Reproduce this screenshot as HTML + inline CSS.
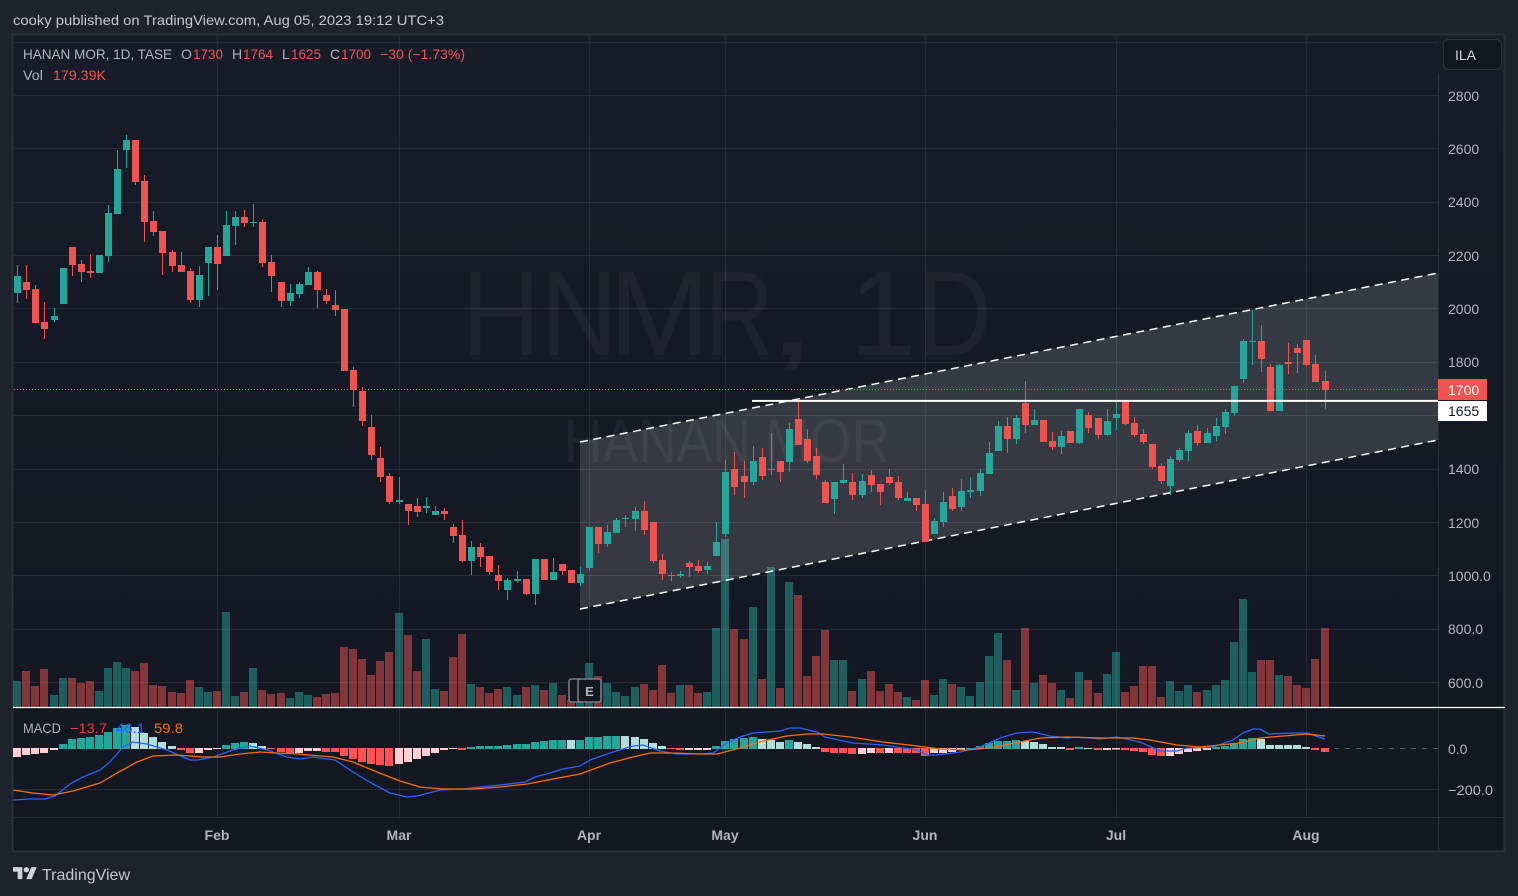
<!DOCTYPE html>
<html>
<head>
<meta charset="utf-8">
<title>HANAN MOR, 1D, TASE</title>
<style>
html,body{margin:0;padding:0;background:#1e222d;width:1518px;height:896px;overflow:hidden}
svg{display:block;position:absolute;left:0;top:0}
text{font-family:"Liberation Sans",sans-serif;font-size:14px}
.p{fill:#b2b5be}
.r{fill:#ef5350}
.t{fill:#b2b5be;font-weight:700;text-anchor:middle}
.w{fill:#fff;fill-opacity:.04;font-size:121px}
</style>
</head>
<body>
<svg width="1518" height="896" viewBox="0 0 1518 896" xmlns="http://www.w3.org/2000/svg">
<defs><linearGradient id="bg" x1="0" y1="0" x2="0" y2="1"><stop offset="0" stop-color="#181c28"/><stop offset="1" stop-color="#131722"/></linearGradient></defs>
<rect width="1518" height="896" fill="#1e222d"/>
<text x="13" y="25" fill="#c6c8d0" textLength="431" lengthAdjust="spacingAndGlyphs">cooky published on TradingView.com, Aug 05, 2023 19:12 UTC+3</text>
<rect x="13" y="35" width="1491" height="816" fill="url(#bg)"/>
<rect x="12.5" y="34.5" width="1492" height="817" fill="none" stroke="#2a2e39" stroke-width="2"/>

<!-- grid -->
<path stroke="#262a35" stroke-width="1" fill="none" d="M14 42.5H1438M14 95.5H1438M14 148.5H1438M14 202.5H1438M14 255.5H1438M14 308.5H1438M14 362.5H1438M14 415.5H1438M14 469.5H1438M14 522.5H1438M14 575.5H1438M14 629.5H1438M14 682.5H1438M14 789.5H1438M217.5 36V817M399.5 36V817M589.5 36V817M725.5 36V817M925.5 36V817M1116.5 36V817M1306.5 36V817"/>
<path stroke="#2a2e39" stroke-width="1" fill="none" d="M14 817.5H1504M1438.5 74V851"/>

<!-- watermark -->
<text x="461" y="355" class="w" textLength="79.5" lengthAdjust="spacingAndGlyphs">H</text>
<text x="541" y="355" class="w" textLength="76" lengthAdjust="spacingAndGlyphs">N</text>
<text x="609" y="355" class="w">M</text>
<text x="704.5" y="355" class="w" textLength="69" lengthAdjust="spacingAndGlyphs">R</text>
<text x="765" y="355" class="w" textLength="54" lengthAdjust="spacingAndGlyphs">,</text>
<text x="849" y="355" class="w">1</text>
<text x="917" y="355" class="w" textLength="75" lengthAdjust="spacingAndGlyphs">D</text>
<text x="564" y="462" fill="#fff" fill-opacity=".05" style="font-size:61px" textLength="326" lengthAdjust="spacingAndGlyphs">HANAN MOR</text>

<!-- volume -->
<g fill="none" stroke-width="8">
<path stroke="#26a69a" stroke-opacity=".5" d="M17 681V707M54 695V707M63 678V707M99 691V707M108 668V707M117 662V707M126 668V707M199 687V707M208 692V707M226 612V707M235 696V707M253 668V707M290 698V707M299 692V707M308 695V707M399 613V707M426 639V707M435 689V707M471 684V707M507 687V707M517 695V707M535 685V707M553 683V707M580 697V707M589 663V707M607 683V707M616 692V707M625 696V707M635 687V707M680 685V707M707 692V707M716 628V707M725 539V707M753 607V707M771 567V707M789 582V707M834 660V707M843 660V707M862 679V707M907 697V707M934 695V707M943 679V707M961 687V707M970 696V707M980 682V707M989 656V707M998 633V707M1016 690V707M1034 683V707M1061 690V707M1079 672V707M1107 674V707M1116 652V707M1170 681V707M1179 691V707M1188 685V707M1207 690V707M1216 685V707M1225 680V707M1234 642V707M1243 599V707M1252 672V707M1279 675V707"/>
<path stroke="#ef5350" stroke-opacity=".5" d="M26 671V707M35 686V707M44 669V707M72 678V707M81 683V707M90 681V707M135 671V707M144 663V707M153 685V707M162 686V707M172 692V707M181 693V707M190 680V707M217 691V707M244 692V707M262 690V707M271 694V707M281 693V707M317 697V707M326 694V707M335 693V707M344 647V707M353 649V707M362 659V707M371 675V707M380 661V707M389 652V707M408 635V707M417 671V707M444 691V707M453 657V707M462 634V707M480 687V707M489 693V707M498 689V707M526 687V707M544 690V707M562 695V707M571 700V707M598 676V707M644 684V707M653 690V707M662 665V707M671 693V707M689 685V707M698 693V707M734 629V707M744 639V707M762 679V707M780 688V707M798 595V707M807 676V707M816 656V707M825 630V707M852 691V707M871 671V707M880 691V707M889 684V707M898 692V707M916 700V707M925 680V707M952 684V707M1007 660V707M1025 628V707M1043 675V707M1052 683V707M1070 698V707M1088 680V707M1098 693V707M1125 692V707M1134 686V707M1143 666V707M1152 666V707M1161 697V707M1197 692V707M1261 660V707M1270 660V707M1288 676V707M1297 685V707M1306 688V707M1315 659V707M1325 628V707"/>
</g>

<!-- channel -->
<polygon points="580,442 1438,273 1438,440 580,609" fill="#fff" fill-opacity=".14"/>
<path d="M580 442L1438 273M580 609L1438 440" stroke="#fff" stroke-width="1.5" stroke-dasharray="8 5.5" fill="none"/>

<!-- last price dotted -->
<path d="M14 389.5H1438" stroke="#ef5350" stroke-width="1" stroke-dasharray="1 2" fill="none"/>

<!-- candle wicks -->
<g fill="none" stroke-width="1">
<path stroke="#26a69a" d="M17.5 265V303M54.5 308V322M108.5 205V262M117.5 150V214M126.5 135V168M199.5 266V307M208.5 247V296M226.5 211V256M235.5 211V245M253.5 204V227M290.5 284V306M299.5 282V298M308.5 267V285M399.5 477V504M426.5 497V513M435.5 506V515M471.5 541V575M507.5 578V600M517.5 571V583M535.5 559V605M553.5 558V580M580.5 567V586M589.5 527V571M607.5 525V547M616.5 518V533M625.5 515V527M635.5 507V531M680.5 571V578M707.5 562V574M716.5 522V556M725.5 460V537M753.5 446V485M771.5 433V475M789.5 423V472M834.5 482V514M843.5 464V484M862.5 474V498M907.5 492V501M934.5 518V534M943.5 492V527M961.5 479V511M970.5 477V498M980.5 469V496M989.5 442V474M998.5 421V451M1016.5 415V444M1034.5 409V425M1061.5 431V454M1079.5 409V444M1107.5 409V436M1116.5 400V430M1170.5 456V495M1179.5 448V462M1188.5 430V461M1207.5 428V443M1216.5 418V441M1225.5 409V434M1234.5 386V416M1243.5 339V383M1252.5 310V365M1279.5 364V411"/>
<path stroke="#ef5350" d="M26.5 265V299M35.5 285V323M44.5 302V339M72.5 247V276M81.5 260V282M90.5 254V278M135.5 140V185M144.5 175V242M153.5 211V236M162.5 231V275M172.5 250V272M181.5 252V272M190.5 268V303M217.5 235V290M244.5 210V227M262.5 219V267M271.5 255V292M281.5 282V307M317.5 271V308M326.5 289V304M335.5 290V316M344.5 309V371M353.5 367V407M362.5 387V426M371.5 415V460M380.5 447V482M389.5 473V504M408.5 504V525M417.5 498V517M444.5 508V520M453.5 524V543M462.5 520V562M480.5 543V567M489.5 556V575M498.5 565V590M526.5 579V595M544.5 559V580M562.5 564V575M571.5 570V583M598.5 527V553M644.5 501V535M653.5 522V563M662.5 554V580M671.5 572V581M689.5 561V577M698.5 560V573M734.5 452V495M744.5 461V498M762.5 448V480M780.5 461V482M798.5 399V445M807.5 429V463M816.5 448V479M825.5 480V503M852.5 473V500M871.5 470V492M880.5 484V505M889.5 469V485M898.5 476V500M916.5 498V511M925.5 490V542M952.5 488V511M1007.5 417V453M1025.5 381V433M1043.5 420V442M1052.5 432V450M1070.5 431V443M1088.5 412V433M1098.5 418V439M1125.5 402V425M1134.5 417V437M1143.5 429V444M1152.5 444V469M1161.5 463V484M1197.5 425V446M1261.5 325V372M1270.5 364V411M1288.5 343V374M1297.5 344V373M1306.5 340V366M1315.5 355V382M1325.5 371V409"/>
</g>
<!-- candle bodies -->
<g fill="none" stroke-width="7">
<path stroke="#26a69a" d="M17.5 276V293M54.5 316V320M63.5 268V304M99.5 255V273M108.5 213V256M117.5 169V214M126.5 140V150M199.5 275V300M208.5 247V263M226.5 225V256M235.5 217V226M253.5 222V223M290.5 293V301M299.5 284V294M308.5 272V285M399.5 500V502M426.5 506V508M435.5 511V515M471.5 547V561M507.5 580V590M517.5 579V581M535.5 559V594M553.5 572V580M580.5 574V583M589.5 527V568M607.5 532V544M616.5 520V533M625.5 518V519M635.5 511V519M680.5 574V576M707.5 566V570M716.5 542V556M725.5 472V534M753.5 461V482M771.5 469V470M789.5 429V462M834.5 482V499M843.5 480V483M862.5 481V495M907.5 498V501M934.5 521V534M943.5 502V522M961.5 491V507M970.5 490V492M980.5 473V491M989.5 453V474M998.5 426V451M1016.5 418V439M1034.5 420V425M1061.5 436V447M1079.5 409V443M1107.5 421V435M1116.5 414V418M1170.5 459V486M1179.5 450V460M1188.5 433V451M1207.5 433V443M1216.5 426V436M1225.5 412V427M1234.5 386V413M1243.5 341V379M1252.5 341V342M1279.5 365V411"/>
<path stroke="#ef5350" d="M26.5 282V290M35.5 289V323M44.5 322V329M72.5 247V265M81.5 264V272M90.5 271V273M135.5 140V182M144.5 181V222M153.5 221V232M162.5 231V253M172.5 252V266M181.5 265V272M190.5 271V300M217.5 247V264M244.5 217V223M262.5 222V263M271.5 262V276M281.5 282V301M317.5 272V290M326.5 295V301M335.5 305V310M344.5 309V371M353.5 370V390M362.5 391V421M371.5 427V455M380.5 458V477M389.5 476V502M408.5 504V511M417.5 506V512M444.5 511V514M453.5 527V536M462.5 535V561M480.5 547V557M489.5 556V572M498.5 575V581M526.5 579V594M544.5 559V580M562.5 564V571M571.5 570V583M598.5 527V544M644.5 511V530M653.5 522V561M662.5 560V574M671.5 575V576M689.5 563V567M698.5 566V571M734.5 469V487M744.5 476V482M762.5 457V476M780.5 461V472M798.5 419V445M807.5 439V461M816.5 456V475M825.5 482V503M852.5 482V495M871.5 475V485M880.5 484V492M889.5 477V483M898.5 482V498M916.5 498V505M925.5 504V542M952.5 496V509M1007.5 426V439M1025.5 403V425M1043.5 420V442M1052.5 441V447M1070.5 431V443M1088.5 415V428M1098.5 418V435M1125.5 402V424M1134.5 423V435M1143.5 434V442M1152.5 444V467M1161.5 466V481M1197.5 431V443M1261.5 341V359M1270.5 367V411M1288.5 362V364M1297.5 348V353M1306.5 340V365M1315.5 364V382M1325.5 381V390"/>
</g>

<!-- horizontal level -->
<path d="M752 400.9H1438" stroke="#fff" stroke-width="2" fill="none"/>

<!-- volume/macd separator -->
<path d="M13 707.5H1505" stroke="#fff" stroke-width="1.2" fill="none"/>

<!-- MACD zero -->
<path d="M14 748.5H1438" stroke="#787b86" stroke-opacity=".6" stroke-width="1" stroke-dasharray="5 6" fill="none"/>

<!-- MACD histogram -->
<g fill="none" stroke-width="8">
<path stroke="#26a69a" d="M63 744V749M72 739V749M81 738V749M90 737V749M99 735V749M108 732V749M117 728V749M126 725V749M226 745V749M235 743V749M244 742V749M471 747V749M480 746V749M489 746V749M498 746V749M507 745V749M517 744V749M526 744V749M535 742V749M544 741V749M553 740V749M562 740V749M580 740V749M589 737V749M598 737V749M607 736V749M616 736V749M716 746V749M725 741V749M734 739V749M744 738V749M753 737V749M789 740V749M970 748V749M980 746V749M989 743V749M998 741V749M1007 741V749M1016 740V749M1079 747V749M1216 747V749M1225 746V749M1234 743V749M1243 739V749M1252 738V749"/>
<path stroke="#b2dfdb" d="M135 727V749M144 733V749M153 737V749M162 742V749M172 746V749M253 743V749M262 746V749M571 740V749M625 736V749M635 737V749M644 739V749M653 743V749M662 746V749M762 739V749M771 740V749M780 742V749M798 742V749M807 744V749M816 747V749M1025 741V749M1034 742V749M1043 744V749M1052 747V749M1061 747V749M1088 748V749M1261 739V749M1270 745V749M1279 745V749M1288 745V749M1297 745V749M1306 747V749"/>
<path stroke="#ff5252" d="M181 748V750M190 748V753M271 748V749M281 748V752M290 748V753M326 748V752M335 748V752M344 748V756M353 748V759M362 748V762M371 748V764M380 748V765M389 748V766M462 748V750M671 748V749M680 748V750M825 748V752M834 748V753M843 748V753M852 748V754M880 748V753M898 748V753M907 748V753M916 748V753M925 748V756M1070 748V750M1098 748V750M1125 748V750M1134 748V751M1143 748V752M1152 748V755M1161 748V756M1315 748V750M1325 748V752"/>
<path stroke="#ffcdd2" d="M17 748V757M26 748V755M35 748V754M44 748V753M54 748V750M199 748V753M208 748V750M217 748V749M299 748V753M308 748V751M317 748V751M399 748V764M408 748V762M417 748V759M426 748V756M435 748V753M444 748V750M453 748V749M689 748V750M698 748V750M707 748V750M862 748V754M871 748V753M889 748V753M934 748V753M943 748V753M952 748V752M961 748V750M1107 748V750M1116 748V749.5M1170 748V756M1179 748V754M1188 748V752M1197 748V751M1207 748V750"/>
</g>

<!-- MACD lines -->
<polyline fill="none" stroke="#2962ff" stroke-width="1.3" stroke-linejoin="round" points="13,800 30,799 45,799 55,796 70,784 83,777 100,770 110,762 123,747 133,742 147,744 167,750 190,760 198,760 213,757 233,750 250,746 267,750 287,757 300,759 313,757 335,760 353,772 373,784 390,793 407,797 417,796 440,790 463,789 480,787 500,785 525,782 535,777 550,773 563,769 580,766 590,760 613,752 633,746 643,745 660,751 677,754 700,754 713,753 727,743 740,737 753,733 780,731 790,728 800,728 817,732 825,737 853,743 883,745 917,750 927,755 937,755 960,752 980,747 1000,738 1017,733 1033,732 1050,736 1067,738 1077,737 1100,739 1117,737 1140,742 1160,751 1177,751 1187,748 1213,747 1233,740 1243,733 1253,729 1260,729 1269,734 1293,733 1307,733 1325,739"/>
<polyline fill="none" stroke="#ff6d00" stroke-width="1.3" stroke-linejoin="round" points="13,790 33,793 53,795 73,791 100,783 117,773 137,762 153,756 177,755 203,757 220,757 240,754 260,752 277,753 297,754 333,757 353,762 377,772 400,781 420,787 443,789 473,789 500,787 527,784 553,779 580,774 610,763 633,757 650,753 673,753 700,754 717,754 740,748 763,741 787,736 807,734 823,734 850,737 883,742 917,746 940,749 967,750 987,748 1000,746 1020,742 1040,738 1067,737 1100,738 1133,738 1150,740 1177,745 1200,747 1220,745 1240,743 1260,738 1283,736 1307,734 1325,736"/>

<!-- Earnings badge -->
<rect x="569" y="679" width="14" height="23" rx="2.5" fill="#131722" stroke="#787b86" stroke-width="1.6"/>
<rect x="578" y="679" width="23" height="23" rx="2.5" fill="#131722" stroke="#787b86" stroke-width="1.6"/>
<text x="589.5" y="696" text-anchor="middle" style="font-size:13px;font-weight:700" fill="#b2b5be">E</text>

<!-- legend -->
<text x="23" y="59" class="p" textLength="149" lengthAdjust="spacingAndGlyphs">HANAN MOR, 1D, TASE</text>
<text x="181" y="59" class="p">O</text><text x="193" y="59" class="r" textLength="30" lengthAdjust="spacingAndGlyphs">1730</text>
<text x="232" y="59" class="p">H</text><text x="243" y="59" class="r" textLength="30" lengthAdjust="spacingAndGlyphs">1764</text>
<text x="282" y="59" class="p">L</text><text x="291" y="59" class="r" textLength="30" lengthAdjust="spacingAndGlyphs">1625</text>
<text x="330" y="59" class="p">C</text><text x="341" y="59" class="r" textLength="30" lengthAdjust="spacingAndGlyphs">1700</text>
<text x="380" y="59" class="r" textLength="85" lengthAdjust="spacingAndGlyphs">−30 (−1.73%)</text>
<text x="23" y="80" class="p" textLength="20" lengthAdjust="spacingAndGlyphs">Vol</text>
<text x="53" y="80" class="r" textLength="53" lengthAdjust="spacingAndGlyphs">179.39K</text>

<text x="23" y="733" class="p" textLength="38" lengthAdjust="spacingAndGlyphs">MACD</text>
<text x="70" y="733" fill="#f23645" textLength="37" lengthAdjust="spacingAndGlyphs">−13.7</text>
<text x="116" y="733" fill="#2962ff" textLength="29" lengthAdjust="spacingAndGlyphs">46.1</text>
<text x="154" y="733" fill="#ff6d00" textLength="29" lengthAdjust="spacingAndGlyphs">59.8</text>

<!-- ILA -->
<rect x="1443.5" y="39.5" width="58" height="30" rx="5" fill="#131722" stroke="#2e323d"/>
<text x="1455" y="60" fill="#d1d4dc">ILA</text>

<!-- price axis -->
<g class="p">
<text x="1448" y="101" class="p">2800</text>
<text x="1448" y="154" class="p">2600</text>
<text x="1448" y="207" class="p">2400</text>
<text x="1448" y="261" class="p">2200</text>
<text x="1448" y="314" class="p">2000</text>
<text x="1448" y="367" class="p">1800</text>
<text x="1448" y="474" class="p">1400</text>
<text x="1448" y="528" class="p">1200</text>
<text x="1448" y="581" class="p">1000.0</text>
<text x="1448" y="634" class="p">800.0</text>
<text x="1448" y="688" class="p">600.0</text>
<text x="1448" y="754" class="p">0.0</text>
<text x="1448" y="795" class="p" textLength="45" lengthAdjust="spacingAndGlyphs">−200.0</text>
</g>

<!-- price labels -->
<path d="M1438 379h49v21h-49z" fill="#f05450"/>
<text x="1448" y="395" fill="#fff">1700</text>
<path d="M1438 401h49v20h-49z" fill="#fff"/>
<text x="1448" y="416" fill="#131722">1655</text>

<!-- time axis -->
<text x="217" y="840" class="t">Feb</text>
<text x="399" y="840" class="t">Mar</text>
<text x="589" y="840" class="t">Apr</text>
<text x="725" y="840" class="t">May</text>
<text x="925" y="840" class="t">Jun</text>
<text x="1116" y="840" class="t">Jul</text>
<text x="1306" y="840" class="t">Aug</text>

<!-- logo -->
<g transform="translate(13 864.4) scale(.667)" fill="#d1d4dc">
<path d="M14 22H7V11H0V4h14v18zM28 22h-8l7.5-18h8L28 22z"/><circle cx="20" cy="8" r="4"/>
</g>
<text x="42" y="880" fill="#c6c8d0" style="font-size:16px" textLength="88" lengthAdjust="spacingAndGlyphs">TradingView</text>
</svg>
</body>
</html>
